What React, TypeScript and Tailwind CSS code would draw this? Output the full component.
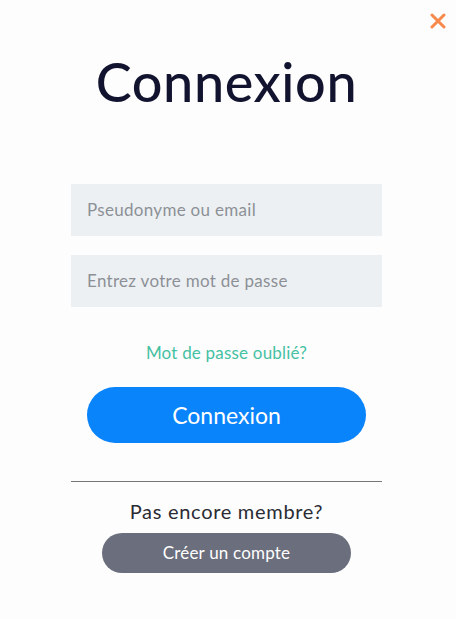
import React from "react";

export default function App() {
  return (
    <div
      className="w-[456px] h-[619px] bg-[#fdfdfd] relative flex flex-col items-center pr-[3px]"
      style={{ fontFamily: "Lato, 'Noto Sans', sans-serif" }}
    >
      <button className="absolute right-[10px] top-[13px] w-[16px] h-[16px]">
        <svg viewBox="0 0 16 16" width="16" height="16">
          <path d="M2 2 L14 14 M14 2 L2 14" stroke="#f7894a" strokeWidth="3" strokeLinecap="round" />
        </svg>
      </button>
      <h1 className="mt-[50px] text-[54px] leading-[64px] text-[#12132f] font-medium tracking-[0.6px]">Connexion</h1>
      <div className="mt-[70px] w-[311px] flex flex-col gap-[19px]">
        <div className="h-[52px] bg-[#edf0f3] flex items-center px-[16px] text-[17px] tracking-[0.3px] text-[#8c9096]">Pseudonyme ou email</div>
        <div className="h-[52px] bg-[#edf0f3] flex items-center px-[16px] text-[17px] tracking-[0.3px] text-[#8c9096]">Entrez votre mot de passe</div>
      </div>
      <div className="mt-[34px] text-[17px] leading-[24px] tracking-[0.2px] text-[#45c1a3]">Mot de passe oublié?</div>
      <button className="mt-[22px] w-[279px] h-[56px] rounded-full bg-[#0a84fb] text-white text-[23px]">Connexion</button>
      <div className="mt-[38px] w-[311px] h-px bg-[#777777]" />
      <div className="mt-[17px] text-[20px] leading-[24px] tracking-[0.7px] text-[#2a2b33]">Pas encore membre?</div>
      <button className="mt-[10px] w-[249px] h-[40px] rounded-full bg-[#6b6e7c] text-white text-[17px] tracking-[0.2px]">Créer un compte</button>
    </div>
  );
}
